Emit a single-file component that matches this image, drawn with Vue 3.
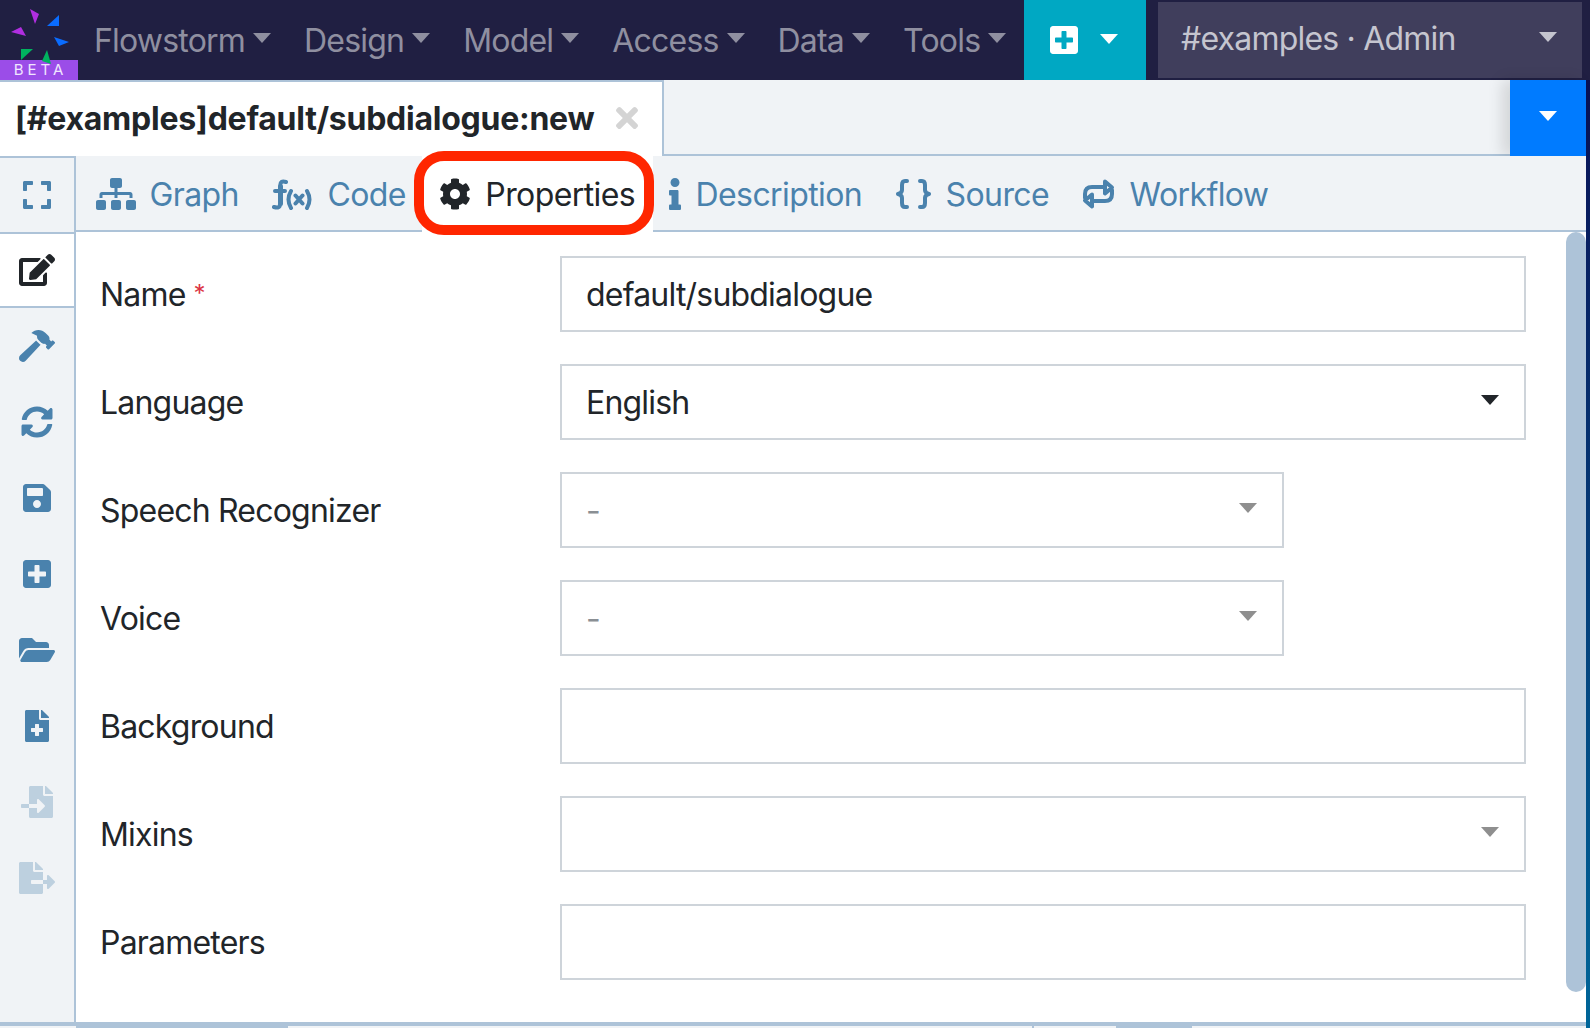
<template>
  <div class="page">
    <!-- Top navbar -->
    <nav class="navbar">
      <div class="logo">
        <svg class="logo-mark" viewBox="0 0 78 66" width="78" height="66">
          <polygon points="30,9 39,14 35,24" fill="#b02ee0" />
          <polygon points="11,32 21,27 26,36" fill="#b02ee0" />
          <polygon points="59,15 59,26 47,26" fill="#0a6cff" />
          <polygon points="54,37 69,42 59,46" fill="#0a6cff" />
          <polygon points="21,49 33,49 21,60" fill="#00b35f" />
          <polygon points="47,50 51,64 42,61" fill="#00b35f" />
        </svg>
        <span class="beta">BETA</span>
      </div>
      <ul class="menu">
        <li v-for="item in menu" :key="item" class="menu-item">
          {{ item }}<i class="caret"></i>
        </li>
      </ul>
      <button class="add-btn">
        <svg class="icon" :viewBox="icons.plusSquare.vb"><path :d="icons.plusSquare.d" /></svg>
        <i class="caret"></i>
      </button>
      <div class="org">
        <span class="org-name">#examples · Admin</span>
        <i class="caret"></i>
      </div>
    </nav>

    <div class="workspace">
      <!-- Tab with the open file -->
      <div class="file-tabs">
        <div class="file-tab">
          <span class="file-name">[#examples]default/subdialogue:new</span>
          <svg class="close" :viewBox="icons.times.vb"><path :d="icons.times.d" /></svg>
        </div>
        <div class="file-tabs-fill"></div>
        <button class="tabs-menu"><i class="caret"></i></button>
      </div>

      <div class="body">
        <!-- Left toolbar -->
        <aside class="sidebar">
          <div
            v-for="tool in tools"
            :key="tool.name"
            class="tool"
            :class="{ active: tool.active, disabled: tool.disabled }"
          >
            <svg class="icon" :viewBox="icons[tool.name].vb"><path :d="icons[tool.name].d" /></svg>
          </div>
        </aside>

        <section class="main">
          <div class="sub-tabs">
            <div
              v-for="tab in tabs"
              :key="tab.label"
              class="sub-tab"
              :class="{ active: tab.active }"
            >
              <svg
                class="icon"
                :class="{ line: icons[tab.icon].line }"
                :viewBox="icons[tab.icon].vb"
              >
                <path :d="icons[tab.icon].d" />
              </svg>
              <span>{{ tab.label }}</span>
              <!-- Red annotation round the active tab -->
              <span v-if="tab.active" class="highlight"></span>
            </div>
          </div>

          <div class="form">
            <div v-for="field in fields" :key="field.label" class="row">
              <label class="label">
                {{ field.label }}<span v-if="field.required" class="required">*</span>
              </label>
              <div class="control" :class="{ short: field.short, muted: field.muted }">
                <span>{{ field.value }}</span>
                <i v-if="field.select" class="caret" :class="{ dark: field.darkCaret }"></i>
              </div>
            </div>
          </div>
          <div class="scrollbar"></div>
        </section>
      </div>

      <!-- Edge of the panel below -->
      <div class="bottom">
        <span class="seg-a"></span>
        <span class="seg-b"></span>
        <span class="seg-c"></span>
        <span class="seg-d"></span>
      </div>
    </div>
  </div>
</template>

<script setup>
const icons = {
  expand: { vb: '0 0 448 512', d: 'M0 180V56c0-13.3 10.7-24 24-24h124c6.6 0 12 5.4 12 12v40c0 6.6-5.4 12-12 12H64v84c0 6.6-5.4 12-12 12H12c-6.6 0-12-5.4-12-12zM288 44v40c0 6.6 5.4 12 12 12h84v84c0 6.6 5.4 12 12 12h40c6.6 0 12-5.4 12-12V56c0-13.3-10.7-24-24-24H300c-6.6 0-12 5.4-12 12zm148 276h-40c-6.6 0-12 5.4-12 12v84h-84c-6.6 0-12 5.4-12 12v40c0 6.6 5.4 12 12 12h124c13.3 0 24-10.7 24-24V332c0-6.6-5.4-12-12-12zM160 468v-40c0-6.6-5.4-12-12-12H64v-84c0-6.6-5.4-12-12-12H12c-6.6 0-12 5.4-12 12v124c0 13.3 10.7 24 24 24h124c6.6 0 12-5.4 12-12z' },
  edit: { vb: '0 0 576 512', d: 'M402.6 83.2l90.2 90.2c3.8 3.8 3.8 10 0 13.8L274.4 405.6l-92.8 10.3c-12.4 1.4-22.9-9.1-21.5-21.5l10.3-92.8L388.8 83.2c3.8-3.8 10-3.8 13.8 0zm162-22.9l-48.8-48.8c-15.2-15.2-39.9-15.2-55.2 0l-35.4 35.4c-3.8 3.8-3.8 10 0 13.8l90.2 90.2c3.8 3.8 10 3.8 13.8 0l35.4-35.4c15.2-15.3 15.2-40 0-55.2zM384 346.2V448H64V128h229.8c3.2 0 6.2-1.3 8.5-3.5l40-40c7.6-7.6 2.2-20.5-8.5-20.5H48C21.5 64 0 85.5 0 112v352c0 26.5 21.5 48 48 48h352c26.5 0 48-21.5 48-48V306.2c0-10.7-12.9-16-20.5-8.5l-40 40c-2.2 2.3-3.5 5.3-3.5 8.5z' },
  hammer: { vb: '0 0 576 512', d: 'M571.31 193.94l-22.63-22.63c-6.25-6.25-16.38-6.25-22.63 0l-11.31 11.31-28.9-28.9c5.63-21.31.36-44.9-16.35-61.61l-45.25-45.25c-62.48-62.48-163.79-62.48-226.28 0l90.51 45.25v18.75c0 16.97 6.74 33.25 18.75 45.25l49.14 49.14c16.71 16.71 40.3 21.98 61.61 16.35l28.9 28.9-11.31 11.31c-6.25 6.25-6.25 16.38 0 22.63l22.63 22.63c6.25 6.25 16.38 6.25 22.63 0l90.51-90.51c6.23-6.24 6.23-16.37-.02-22.62zm-286.72-15.2c-3.7-3.7-6.84-7.79-9.85-11.95L19.64 404.96c-25.57 23.88-26.26 64.19-1.53 88.93s65.05 24.05 88.93-1.53l238.13-255.07c-3.96-2.91-7.9-5.87-11.44-9.41l-49.14-49.14z' },
  sync: { vb: '0 0 512 512', d: 'M370.72 133.28C339.458 104.008 298.888 87.962 255.848 88c-77.458.068-144.328 53.178-162.791 126.85-1.344 5.363-6.122 9.15-11.651 9.15H24.103c-7.498 0-13.194-6.807-11.807-14.176C33.933 94.924 134.813 8 256 8c66.448 0 126.791 26.136 171.315 68.685L463.03 40.97C478.149 25.851 504 36.559 504 57.941V192c0 13.255-10.745 24-24 24H345.941c-21.382 0-32.09-25.851-16.971-40.971l41.75-41.749zM32 296h134.059c21.382 0 32.09 25.851 16.971 40.971l-41.75 41.75c31.262 29.273 71.835 45.319 114.876 45.28 77.418-.07 144.315-53.144 162.787-126.849 1.344-5.363 6.122-9.15 11.651-9.15h57.304c7.498 0 13.194 6.807 11.807 14.176C478.067 417.076 377.187 504 256 504c-66.448 0-126.791-26.136-171.315-68.685L48.97 471.03C33.851 486.149 8 475.441 8 454.059V320c0-13.255 10.745-24 24-24z' },
  save: { vb: '0 0 448 512', d: 'M433.941 129.941l-83.882-83.882A48 48 0 0 0 316.118 32H48C21.49 32 0 53.49 0 80v352c0 26.51 21.49 48 48 48h352c26.51 0 48-21.49 48-48V163.882a48 48 0 0 0-14.059-33.941zM224 416c-35.346 0-64-28.654-64-64 0-35.346 28.654-64 64-64s64 28.654 64 64c0 35.346-28.654 64-64 64zm96-304.52V212c0 6.627-5.373 12-12 12H76c-6.627 0-12-5.373-12-12V108c0-6.627 5.373-12 12-12h228.52c3.183 0 6.235 1.264 8.485 3.515l3.48 3.48A11.996 11.996 0 0 1 320 111.48z' },
  plusSquare: { vb: '0 0 448 512', d: 'M400 32H48C21.5 32 0 53.5 0 80v352c0 26.5 21.5 48 48 48h352c26.5 0 48-21.5 48-48V80c0-26.5-21.5-48-48-48zm-32 252c0 6.6-5.4 12-12 12h-92v92c0 6.6-5.4 12-12 12h-56c-6.6 0-12-5.4-12-12v-92H92c-6.6 0-12-5.4-12-12v-56c0-6.6 5.4-12 12-12h92v-92c0-6.6 5.4-12 12-12h56c6.6 0 12 5.4 12 12v92h92c6.6 0 12 5.4 12 12v56z' },
  folderOpen: { vb: '0 0 576 512', d: 'M572.694 292.093L500.27 416.248A63.997 63.997 0 0 1 444.989 448H45.025c-18.523 0-30.064-20.093-20.731-36.093l72.424-124.155A64 64 0 0 1 152 256h399.964c18.523 0 30.064 20.093 20.73 36.093zM152 224h328v-48c0-26.51-21.49-48-48-48H272l-64-64H48C21.49 64 0 85.49 0 112v278.046l69.077-118.418C86.214 242.25 117.989 224 152 224z' },
  fileMedical: { vb: '0 0 384 512', d: 'M377 105L279.1 7c-4.5-4.5-10.6-7-17-7H256v128h128v-6.1c0-6.3-2.5-12.4-7-16.9zm-153 31V0H24C10.7 0 0 10.7 0 24v464c0 13.3 10.7 24 24 24h336c13.3 0 24-10.7 24-24V160H248c-13.2 0-24-10.8-24-24zm64 160v48c0 4.4-3.6 8-8 8h-56v56c0 4.4-3.6 8-8 8h-48c-4.4 0-8-3.6-8-8v-56h-56c-4.4 0-8-3.6-8-8v-48c0-4.4 3.6-8 8-8h56v-56c0-4.4 3.6-8 8-8h48c4.4 0 8 3.6 8 8v56h56c4.4 0 8 3.6 8 8z' },
  fileImport: { vb: '0 0 512 512', d: 'M16 288c-8.8 0-16 7.2-16 16v32c0 8.8 7.2 16 16 16h112v-64zm489-183L407.1 7c-4.5-4.5-10.6-7-17-7H384v128h128v-6.1c0-6.3-2.5-12.4-7-16.9zm-153 31V0H152c-13.3 0-24 10.7-24 24v264h128v-65.2c0-14.3 17.3-21.4 27.4-11.3L379 308c6.6 6.7 6.6 17.4 0 24l-95.7 96.4c-10.1 10.1-27.4 3-27.4-11.3V352H128v136c0 13.3 10.7 24 24 24h336c13.3 0 24-10.7 24-24V160H376c-13.2 0-24-10.8-24-24z' },
  fileExport: { vb: '0 0 576 512', d: 'M384 121.9c0-6.3-2.5-12.4-7-16.9L279.1 7c-4.5-4.5-10.6-7-17-7H256v128h128zM571 308l-95.7-96.4c-10.1-10.1-27.4-3-27.4 11.3V288h-64v64h64v65.2c0 14.3 17.3 21.4 27.4 11.3L571 332c6.6-6.7 6.6-17.4 0-24zm-379 28v-32c0-8.8 7.2-16 16-16h176V160H248c-13.2 0-24-10.8-24-24V0H24C10.7 0 0 10.7 0 24v464c0 13.3 10.7 24 24 24h336c13.3 0 24-10.7 24-24V352H208c-8.8 0-16-7.2-16-16z' },
  sitemap: { vb: '0 0 640 512', d: 'M128 352H32c-17.67 0-32 14.33-32 32v96c0 17.67 14.33 32 32 32h96c17.67 0 32-14.33 32-32v-96c0-17.67-14.33-32-32-32zm-24-80h192v48h48v-48h192v48h48v-57.59c0-21.17-17.23-38.41-38.41-38.41H344v-64h40c17.67 0 32-14.33 32-32V32c0-17.67-14.33-32-32-32H256c-17.67 0-32 14.33-32 32v96c0 17.67 14.33 32 32 32h40v64H94.41C73.23 224 56 241.23 56 262.41V320h48v-48zm264 80h-96c-17.67 0-32 14.33-32 32v96c0 17.67 14.33 32 32 32h96c17.67 0 32-14.33 32-32v-96c0-17.67-14.33-32-32-32zm240 0h-96c-17.67 0-32 14.33-32 32v96c0 17.67 14.33 32 32 32h96c17.67 0 32-14.33 32-32v-96c0-17.67-14.33-32-32-32z' },
  cog: { vb: '0 0 512 512', d: 'M487.4 315.7l-42.6-24.6c4.3-23.2 4.3-47 0-70.2l42.6-24.6c4.9-2.8 7.1-8.6 5.5-14-11.1-35.6-30-67.8-54.7-94.6-3.8-4.1-10-5.1-14.8-2.3L380.8 110c-17.9-15.4-38.5-27.3-60.8-35.1V25.8c0-5.6-3.9-10.5-9.4-11.7-36.7-8.2-74.3-7.8-109.2 0-5.5 1.2-9.4 6.1-9.4 11.7V75c-22.2 7.9-42.8 19.8-60.8 35.1L88.7 85.5c-4.9-2.8-11-1.9-14.8 2.3-24.7 26.7-43.6 58.9-54.7 94.6-1.7 5.4.6 11.2 5.5 14L67.3 221c-4.3 23.2-4.3 47 0 70.2l-42.6 24.6c-4.9 2.8-7.1 8.6-5.5 14 11.1 35.6 30 67.8 54.7 94.6 3.8 4.1 10 5.1 14.8 2.3l42.6-24.6c17.9 15.4 38.5 27.3 60.8 35.1v49.2c0 5.6 3.9 10.5 9.4 11.7 36.7 8.2 74.3 7.8 109.2 0 5.5-1.2 9.4-6.1 9.4-11.7v-49.2c22.2-7.9 42.8-19.8 60.8-35.1l42.6 24.6c4.9 2.8 11 1.9 14.8-2.3 24.7-26.7 43.6-58.9 54.7-94.6 1.5-5.5-.7-11.3-5.6-14.1zM256 336c-44.1 0-80-35.9-80-80s35.9-80 80-80 80 35.9 80 80-35.9 80-80 80z' },
  info: { vb: '0 0 192 512', d: 'M20 424.229h20V279.771H20c-11.046 0-20-8.954-20-20V212c0-11.046 8.954-20 20-20h112c11.046 0 20 8.954 20 20v212.229h20c11.046 0 20 8.954 20 20V492c0 11.046-8.954 20-20 20H20c-11.046 0-20-8.954-20-20v-47.771c0-11.046 8.954-20 20-20zM96 0C56.235 0 24 32.235 24 72s32.235 72 72 72 72-32.235 72-72S135.764 0 96 0z' },
  times: { vb: '0 0 352 512', d: 'M242.72 256l100.07-100.07c12.28-12.28 12.28-32.19 0-44.48l-22.24-22.24c-12.28-12.28-32.19-12.28-44.48 0L176 189.28 75.93 89.21c-12.28-12.28-32.19-12.28-44.48 0L9.21 111.45c-12.28 12.28-12.28 32.19 0 44.48L109.28 256 9.21 356.07c-12.28 12.28-12.28 32.19 0 44.48l22.24 22.24c12.28 12.28 32.2 12.28 44.48 0L176 322.72l100.07 100.07c12.28 12.28 32.2 12.28 44.48 0l22.24-22.24c12.28-12.28 12.28-32.19 0-44.48L242.72 256z' },
  func: { vb: '0 0 41 32', line: true, d: 'M14 4Q8 2 8 8V26Q8 31 2 29M9 8V26M3 13H13M19 13Q14 21.500 19 30M35 13Q40 21.500 35 30M23.500 17.500L30.500 25.500M30.500 17.500L23.500 25.500' },
  braces: { vb: '0 0 35 32', line: true, d: 'M11 3H9Q6 3 6 7V12Q6 15 2 16Q6 17 6 20V25Q6 29 9 29H11M24 3H26Q29 3 29 7V12Q29 15 33 16Q29 17 29 20V25Q29 29 26 29H24' },
  loop: { vb: '0 0 33 32', line: true, d: 'M3 20V16Q3 9 10 9H23M23 3.500L30 9.500L23 15.500ZM30 12V16Q30 23 23 23H10M10 16.500L3 22.500L10 28.500Z' }
}

const menu = ['Flowstorm', 'Design', 'Model', 'Access', 'Data', 'Tools']

const tools = [
  { name: 'expand' },
  { name: 'edit', active: true },
  { name: 'hammer' },
  { name: 'sync' },
  { name: 'save' },
  { name: 'plusSquare' },
  { name: 'folderOpen' },
  { name: 'fileMedical' },
  { name: 'fileImport', disabled: true },
  { name: 'fileExport', disabled: true }
]

const tabs = [
  { label: 'Graph', icon: 'sitemap' },
  { label: 'Code', icon: 'func' },
  { label: 'Properties', icon: 'cog', active: true },
  { label: 'Description', icon: 'info' },
  { label: 'Source', icon: 'braces' },
  { label: 'Workflow', icon: 'loop' }
]

const fields = [
  { label: 'Name', value: 'default/subdialogue', required: true },
  { label: 'Language', value: 'English', select: true, darkCaret: true },
  { label: 'Speech Recognizer', value: '-', select: true, short: true, muted: true },
  { label: 'Voice', value: '-', select: true, short: true, muted: true },
  { label: 'Background', value: '' },
  { label: 'Mixins', value: '', select: true },
  { label: 'Parameters', value: '' }
]
</script>

<style scoped>
.page {
  height: 1028px;
  overflow: hidden;
  font-family: Inter, "Liberation Sans", sans-serif;
  font-size: 32px;
  letter-spacing: -0.8px;
  color: #212529;
  background: linear-gradient(#0a0a50, #006699);
}

.icon {
  display: block;
  height: 32px;
  fill: currentColor;
  flex: none;
}

.icon.line {
  fill: none;
  stroke: currentColor;
  stroke-width: 4;
  stroke-linecap: round;
  stroke-linejoin: round;
}

.caret {
  display: inline-block;
  width: 0;
  height: 0;
  margin-left: 8px;
  border-top: 10px solid currentColor;
  border-left: 9.5px solid transparent;
  border-right: 9.5px solid transparent;
}

/* Navbar */
.navbar {
  height: 80px;
  display: flex;
  background: #201f42;
  color: #8f8fa0;
}

.logo {
  width: 78px;
  height: 80px;
  position: relative;
  flex: none;
}

.logo-mark {
  display: block;
  position: relative;
  z-index: 1;
}

.beta {
  position: absolute;
  left: 0;
  bottom: 0;
  width: 78px;
  height: 20px;
  padding-left: 3px;
  box-sizing: border-box;
  background: #9b4de8;
  color: #f0e6ff;
  font-size: 15px;
  line-height: 20px;
  letter-spacing: 4px;
  text-align: center;
}

.menu {
  list-style: none;
  margin: 0;
  padding: 0 0 0 16px;
  display: flex;
  align-items: center;
  width: 946px;
  flex: none;
  box-sizing: border-box;
  gap: 33px;
}

.menu-item {
  display: flex;
  align-items: center;
  white-space: nowrap;
}

.menu-item .caret {
  margin-bottom: 4px;
}

.add-btn {
  width: 122px;
  flex: none;
  border: 0;
  padding: 0 0 0 26px;
  background: #00a8c3;
  color: #fff;
  display: flex;
  align-items: center;
}

.add-btn .caret {
  margin-left: 22px;
  margin-bottom: 3px;
}

.org {
  width: 424px;
  height: 76px;
  margin: 2px 0 0 12px;
  padding: 0 25px 0 23px;
  box-sizing: border-box;
  flex: none;
  background: #403e5c;
  color: #c5c5cf;
  display: flex;
  align-items: center;
  justify-content: space-between;
}

.org-name {
  margin-bottom: 4px;
}

.org .caret {
  margin-bottom: 6px;
}

/* File tabs */
.workspace {
  width: 1586px;
  background: #f0f3f6;
}

.file-tabs {
  height: 76px;
  display: flex;
}

.file-tab {
  width: 664px;
  box-sizing: border-box;
  flex: none;
  padding: 0 0 2px 15px;
  display: flex;
  align-items: center;
  gap: 22px;
  background: #fff;
  border-top: 2px solid #adc3d8;
  border-right: 2px solid #adc3d8;
}

.file-name {
  font-weight: 700;
  letter-spacing: -0.25px;
  white-space: nowrap;
}

.close {
  height: 32px;
  fill: #d4d4d4;
  flex: none;
}

.file-tabs-fill {
  flex: 1;
  border-bottom: 2px solid #adc3d8;
}

.tabs-menu {
  width: 76px;
  flex: none;
  border: 0;
  padding: 0;
  background: #007bff;
  color: #fff;
  box-shadow: -8px 0 14px rgba(0, 0, 0, 0.12);
  position: relative;
}

.tabs-menu .caret {
  display: block;
  margin: 0 auto 4px;
}

/* Body */
.body {
  height: 866px;
  display: flex;
}

.sidebar {
  width: 76px;
  flex: none;
  box-sizing: border-box;
  border-top: 2px solid #adc3d8;
  border-right: 2px solid #adc3d8;
  color: #4a82ad;
}

.tool {
  height: 76px;
  box-sizing: border-box;
  display: flex;
  align-items: center;
  justify-content: center;
}

.tool:first-child {
  border-bottom: 2px solid #adc3d8;
}

.tool.active {
  height: 74px;
  background: #fff;
  color: #212529;
  border-bottom: 2px solid #adc3d8;
}

.tool.disabled {
  opacity: 0.3;
}

.main {
  flex: 1;
  position: relative;
  background: #fff;
}

.sub-tabs {
  height: 76px;
  box-sizing: border-box;
  padding-left: 4px;
  display: flex;
  background: #f0f3f6;
  border-bottom: 2px solid #adc3d8;
  color: #4a82ad;
  letter-spacing: -0.6px;
}

.sub-tab {
  height: 76px;
  box-sizing: border-box;
  padding: 0 16.500px;
  display: flex;
  align-items: center;
  gap: 14.500px;
  position: relative;
  white-space: nowrap;
}

.sub-tab:first-child {
  padding-left: 16px;
  gap: 13.500px;
}

.sub-tab:nth-child(3),
.sub-tab:nth-child(4) {
  padding-right: 17.500px;
}

.sub-tab.active {
  background: #fff;
  color: #212529;
}

.highlight {
  position: absolute;
  top: -5px;
  left: -8px;
  right: -1px;
  bottom: -3px;
  border: 10px solid #ff2600;
  border-radius: 30px;
}

/* Form */
.form {
  padding: 24px 60px 0 24px;
  display: flex;
  flex-direction: column;
  gap: 32px;
}

.row {
  display: flex;
  align-items: center;
  height: 76px;
}

.label {
  width: 460px;
  flex: none;
}

.required {
  margin-left: 8px;
  color: #dc3545;
  font-size: 24px;
  vertical-align: 4px;
}

.control {
  width: 966px;
  height: 76px;
  box-sizing: border-box;
  padding: 0 25px 0 24px;
  border: 2px solid #ced4da;
  display: flex;
  align-items: center;
  justify-content: space-between;
  color: #212529;
}

.control.short {
  width: 724px;
}

.control.muted {
  color: #8a8f94;
}

.control .caret {
  margin-bottom: 4px;
  color: #8f8f8f;
}

.control .caret.dark {
  color: #212529;
}

.scrollbar {
  position: absolute;
  top: 76px;
  right: 0;
  width: 20px;
  height: 760px;
  border-radius: 10px;
  background: #adc3d8;
}

/* Bottom strip */
.bottom {
  height: 6px;
  box-sizing: border-box;
  border-top: 4px solid #adc3d8;
  display: flex;
}

.bottom span {
  display: block;
  height: 2px;
}

.seg-a {
  width: 76px;
  border-right: 2px solid #adc3d8;
}

.seg-b {
  width: 210px;
  background: #adc3d8;
}

.seg-c {
  width: 744px;
  border-right: 2px solid #adc3d8;
}

.seg-d {
  width: 76px;
  margin-left: 82px;
  background: #adc3d8;
}
</style>
